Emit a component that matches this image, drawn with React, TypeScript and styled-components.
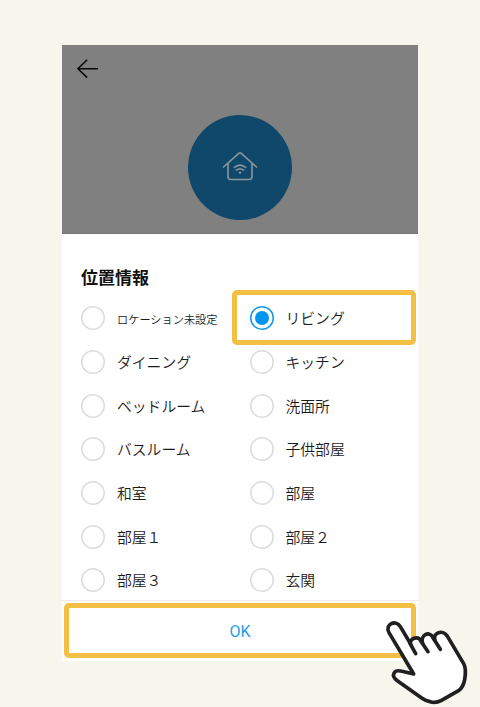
import React from 'react';
import styled, { createGlobalStyle } from 'styled-components';

const GlobalStyle = createGlobalStyle`
  * { box-sizing: border-box; }
  body { margin: 0; background: #f6f6ed; }
`;

const Page = styled.main`
  position: relative;
  width: 480px;
  height: 707px;
  padding: 45px 62px 46px;
  overflow: hidden;
  background: #f6f6ed;
  font-family: 'Noto Sans CJK JP', sans-serif;
  color: #1c1c1c;
`;

const Phone = styled.section`
  display: flex;
  flex-direction: column;
  width: 356px;
  height: 616px;
  background: #fff;
`;

const Hero = styled.header`
  display: flex;
  flex-direction: column;
  flex: none;
  height: 189px;
  padding: 14px 14px 0;
  background: #808080;
  border-bottom: 1px solid #747474;
`;

const BackButton = styled.button`
  display: flex;
  width: 24px;
  height: 20px;
  padding: 0;
  border: 0;
  background: none;
`;

const HomeBadge = styled.div`
  display: flex;
  align-items: center;
  justify-content: center;
  align-self: center;
  width: 104px;
  height: 105px;
  margin-top: 36px;
  border-radius: 50%;
  background: #0f486a;
`;

const Sheet = styled.div`
  flex: none;
  height: 366px;
  padding: 30px 0 0 19px;
`;

const Title = styled.h1`
  margin: 0 0 6.6px;
  height: 26px;
  font-size: 17px;
  line-height: 26px;
  font-weight: 700;
  color: #111;
`;

const Options = styled.div`
  display: grid;
  grid-template-columns: 168.5px 168.5px;
  grid-auto-rows: 43.67px;
`;

const Option = styled.label`
  position: relative;
  display: flex;
  align-items: center;
  gap: 12px;
`;

const Radio = styled.span<{ $checked: boolean }>`
  display: flex;
  flex: none;
  align-items: center;
  justify-content: center;
  width: 24px;
  height: 24px;
  box-shadow: inset 0 0 0 1.5px ${p => (p.$checked ? '#0c98ee' : '#dcdcdc')};
  border-radius: 50%;
  &::after {
    content: '';
    width: 14px;
    height: 14px;
    border-radius: 50%;
    background: ${p => (p.$checked ? '#0095ef' : 'transparent')};
  }
`;

const Label = styled.span<{ $small: boolean }>`
  font-size: ${p => (p.$small ? '11.2px' : '14.8px')};
  font-weight: 350;
  line-height: 22px;
  white-space: nowrap;
  padding-top: ${p => (p.$small ? '2px' : '0')};
`;

const SelectedFrame = styled.span`
  position: absolute;
  left: -17.5px;
  top: -6.6px;
  width: 184px;
  height: 55px;
  border: 5px solid #f3bf45;
  border-radius: 5px;
`;

const Footer = styled.footer`
  flex: 1;
  padding: 2px 2px 3px;
  border-top: 1px solid #ededf0;
`;

const OkButton = styled.button`
  display: flex;
  align-items: center;
  justify-content: center;
  width: 352px;
  height: 55px;
  padding: 1px 0 0;
  border: 5px solid #f3bf45;
  border-radius: 5px;
  background: #fff;
  color: #1b9fee;
  font: 16px Roboto, sans-serif;
`;

const Pointer = styled.svg`
  position: absolute;
  left: 370px;
  top: 600px;
`;

const rooms = [
  'ロケーション未設定', 'リビング', 'ダイニング', 'キッチン', 'ベッドルーム', '洗面所',
  'バスルーム', '子供部屋', '和室', '部屋', '部屋１', '部屋２', '部屋３', '玄関',
];

const BackArrow = () => (
  <svg width="24" height="20" viewBox="0 0 24 20" fill="none" stroke="#080808" strokeWidth="1.5">
    <path d="M11.2 .8 1.9 9.7l9.3 8.9M2 9.7h20" />
  </svg>
);

const HouseIcon = () => (
  <svg width="36" height="32" viewBox="0 0 36 32" fill="none" stroke="#8b969d" strokeWidth="1.6" strokeLinecap="round" strokeLinejoin="round">
    <path d="M1.5 15 16.8 1.4Q18 .4 19.2 1.4L34.5 15M6 11.3v13.2q0 3 3 3h18q3 0 3-3V11.3" />
    <path d="M12.4 15.4q5.6-4.6 11.2 0M14.5 18.2q3.5-2.8 7 0" />
    <circle cx="18" cy="20.6" r="1.2" fill="#8b969d" stroke="none" />
  </svg>
);

const HandPointer = () => (
  <Pointer width="110" height="107" viewBox="0 0 330 321">
    <path
      d="M131 222 57 98C43 73 78 57 91 80L122 132C117 117 143 105 153 122L158 130C150 105 178 91 189 112L195 121C187 98 219 88 231 107L281 191C289 205 287 222 284 239Q280 261 267 271L213 302Q197 310 180 305Q166 302 155 294L82 242C60 226 73 207 96 214Z"
      fill="#fff"
      stroke="#202020"
      strokeWidth="11"
      strokeLinejoin="round"
    />
    <path d="M120 130 137 161M152 122 174 155M188 112 211 148" fill="none" stroke="#202020" strokeWidth="11" strokeLinecap="round" />
  </Pointer>
);

export default function App() {
  return (
    <Page>
      <GlobalStyle />
      <Phone>
        <Hero>
          <BackButton aria-label="戻る"><BackArrow /></BackButton>
          <HomeBadge><HouseIcon /></HomeBadge>
        </Hero>
        <Sheet>
          <Title>位置情報</Title>
          <Options>
            {rooms.map((room, i) => (
              <Option key={room}>
                {i === 1 && <SelectedFrame />}
                <Radio $checked={i === 1} />
                <Label $small={i === 0}>{room}</Label>
              </Option>
            ))}
          </Options>
        </Sheet>
        <Footer><OkButton>OK</OkButton></Footer>
      </Phone>
      <HandPointer />
    </Page>
  );
}
